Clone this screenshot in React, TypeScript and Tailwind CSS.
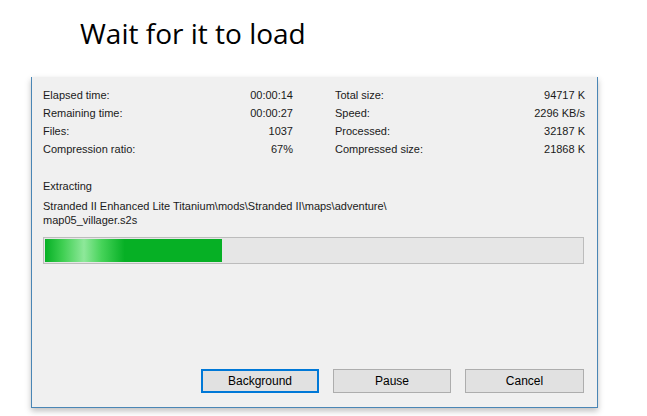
export default function App() {
  const left = [
    ["Elapsed time:", "00:00:14"],
    ["Remaining time:", "00:00:27"],
    ["Files:", "1037"],
    ["Compression ratio:", "67%"],
  ];
  const right = [
    ["Total size:", "94717 K"],
    ["Speed:", "2296 KB/s"],
    ["Processed:", "32187 K"],
    ["Compressed size:", "21868 K"],
  ];

  return (
    <div className="w-[647px] h-[416px] bg-white overflow-hidden">
      {/* caption */}
      <div className="h-[77px] pl-[80px] pt-[15px]">
        <div className="text-[28px] leading-[36px] text-black" style={{ fontFamily: '"Open Sans", sans-serif' }}>
          Wait for it to load
        </div>
      </div>

      {/* dialog */}
      <div
        className="ml-[31px] w-[567px] h-[331px] bg-[#f0f0f0] border-x border-b border-[#4a86b5] shadow-[0_3px_6px_rgba(0,0,0,0.25)] flex flex-col pl-[11px] pr-[11px] pt-[9px] pb-[14px] text-[11px] text-[#1a1a1a]"
        style={{ fontFamily: '"Liberation Sans", Arial, sans-serif' }}
      >
        <div className="flex gap-[42px]">
          {[left, right].map((col, ci) => (
            <div key={ci} className="w-[250px] flex flex-col">
              {col.map(([k, v]) => (
                <div key={k} className="flex justify-between h-[18px] leading-[18px]">
                  <span>{k}</span>
                  <span>{v}</span>
                </div>
              ))}
            </div>
          ))}
        </div>

        <div className="mt-[21px] leading-[14px]">Extracting</div>
        <div className="mt-[6px] leading-[14px]">
          Stranded II Enhanced Lite Titanium\mods\Stranded II\maps\adventure\
          <br />
          map05_villager.s2s
        </div>

        {/* progress */}
        <div className="mt-[10px] w-[541px] h-[27px] border border-[#bcbcbc] bg-[#e6e6e6] p-px">
          <div className="h-full w-[177px] bg-[linear-gradient(90deg,#06b025_0%,#3fcf52_10%,#8ee89a_22%,#46d359_32%,#06b025_45%,#06b025_100%)]" />
        </div>

        <div className="flex-1" />

        <div className="flex justify-end gap-[14px] pr-[2px]">
          <button
            type="button"
            className="w-[118px] h-[24px] border-2 border-[#0078d7] bg-[#e1e1e1] text-[12px] text-black"
          >
            Background
          </button>
          <button
            type="button"
            className="w-[118px] h-[24px] border border-[#adadad] bg-[#e1e1e1] text-[12px] text-black"
          >
            Pause
          </button>
          <button
            type="button"
            className="w-[119px] h-[24px] border border-[#adadad] bg-[#e1e1e1] text-[12px] text-black"
          >
            Cancel
          </button>
        </div>
      </div>
    </div>
  );
}
